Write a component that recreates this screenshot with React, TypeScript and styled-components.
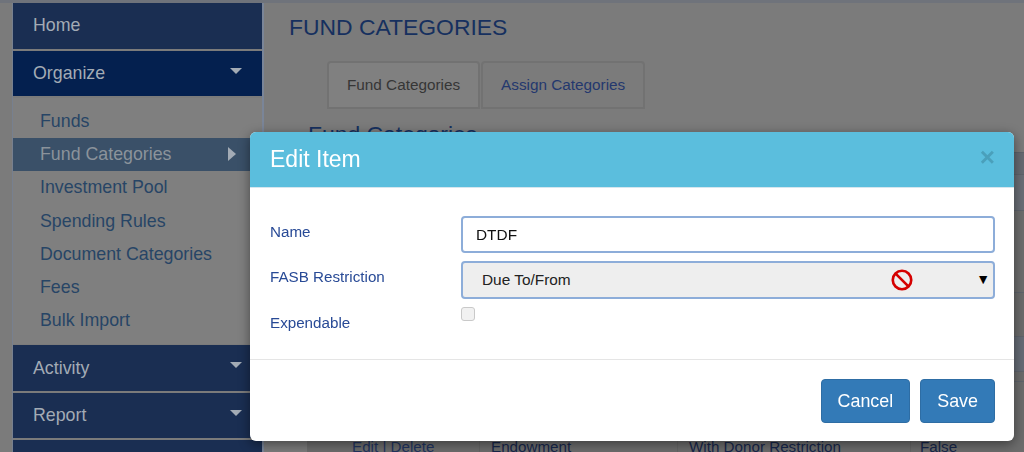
import styled, { createGlobalStyle } from "styled-components";

const GlobalStyle = createGlobalStyle`
  html, body {
    margin: 0;
    height: 100%;
    overflow: hidden;
    background: #7b7b7b;
    font-family: "Liberation Sans", Arial, sans-serif;
  }
`;

const subItems = [
  "Funds",
  "Fund Categories",
  "Investment Pool",
  "Spending Rules",
  "Document Categories",
  "Fees",
  "Bulk Import",
];

function App() {
  return (
    <>
      <GlobalStyle />
      <Page>
        <Sidebar>
          <NavHeader>Home</NavHeader>
          <NavHeader $open>
            Organize
            <CaretDown />
          </NavHeader>
          <SubMenu>
            {subItems.map((item) => (
              <SubItem key={item} $active={item === "Fund Categories"}>
                {item}
                {item === "Fund Categories" && <CaretRight />}
              </SubItem>
            ))}
          </SubMenu>
          <NavHeader>
            Activity
            <CaretDown />
          </NavHeader>
          <NavHeader>
            Report
            <CaretDown />
          </NavHeader>
          <NavHeader />
        </Sidebar>
        <Main>
          <PageTitle>FUND CATEGORIES</PageTitle>
          <Tabs>
            <Tab $active>Fund Categories</Tab>
            <Tab>Assign Categories</Tab>
          </Tabs>
          <SectionTitle>Fund Categories</SectionTitle>
          <Table>
            <TableRow $height={22} $tone="#666a72" />
            <TableRow $height={36} $tone="#6a6e76" />
            <TableRow $height={82} $tone="#6d6d6d" />
            <TableRow $height={44} $tone="#6b6b6b" />
            <TableRow $height={35} $tone="#656b75" />
            <TableRow $height={10} $tone="#6b6b6b" />
            <TableRow $height={74} $tone="#6c6c6c">
              <LinkCell>Edit | Delete</LinkCell>
              <TypeCell>Endowment</TypeCell>
              <RestrictionCell>With Donor Restriction</RestrictionCell>
              <FlagCell>False</FlagCell>
            </TableRow>
          </Table>
        </Main>
      </Page>
      <Modal>
        <ModalHeader>
          <ModalTitle>Edit Item</ModalTitle>
          <CloseButton>×</CloseButton>
        </ModalHeader>
        <ModalBody>
          <Label>Name</Label>
          <TextInput>DTDF</TextInput>
          <Label>FASB Restriction</Label>
          <SelectBox>
            Due To/From
            <NoEntry viewBox="0 0 20 20" aria-hidden="true">
              <circle cx="10" cy="10" r="8.4" fill="none" stroke="#d50000" strokeWidth="2.4" />
              <line x1="4.2" y1="4.2" x2="15.8" y2="15.8" stroke="#d50000" strokeWidth="2.4" />
            </NoEntry>
            <SelectArrow>▼</SelectArrow>
          </SelectBox>
          <Label>Expendable</Label>
          <CheckCell>
            <Checkbox />
          </CheckCell>
        </ModalBody>
        <ModalFooter>
          <FooterButton>Cancel</FooterButton>
          <FooterButton>Save</FooterButton>
        </ModalFooter>
      </Modal>
    </>
  );
}

export default App;

const Page = styled.div`
  display: flex;
  height: 452px;
  overflow: hidden;
  border-top: 3px solid #6f737b;
  box-sizing: border-box;
  padding-left: 13px;
`;

const Sidebar = styled.nav`
  width: 249px;
  flex-shrink: 0;
  display: flex;
  flex-direction: column;
  gap: 2px;
  border-left: 1px solid #77808f;
  margin-left: -1px;
  border-right: 2px solid #7a8598;
`;

const NavHeader = styled.div<{ $open?: boolean }>`
  flex-shrink: 0;
  height: 45.5px;
  box-sizing: border-box;
  padding: 0 0 0 20px;
  display: flex;
  align-items: center;
  position: relative;
  font-size: 17.8px;
  color: #a3abb5;
  background: ${(p) => (p.$open ? "#04204f" : "#1a2e52")};
`;

const CaretDown = styled.span`
  position: absolute;
  top: 17px;
  left: 217px;
  width: 0;
  height: 0;
  border-top: 6px solid #a3abb5;
  border-left: 6px solid transparent;
  border-right: 6px solid transparent;
`;

const CaretRight = styled.span`
  position: absolute;
  top: 9px;
  left: 215px;
  width: 0;
  height: 0;
  border-left: 8px solid #a3abb5;
  border-top: 7px solid transparent;
  border-bottom: 7px solid transparent;
`;

const SubMenu = styled.div`
  flex-shrink: 0;
  background: #7f7f7f;
  padding: 7px 0 7px;
  margin-bottom: -1px;
`;

const SubItem = styled.div<{ $active?: boolean }>`
  height: 33.2px;
  padding-left: 27px;
  box-sizing: border-box;
  display: flex;
  align-items: center;
  position: relative;
  font-size: 17.8px;
  color: ${(p) => (p.$active ? "#8b939b" : "#274566")};
  background: ${(p) => (p.$active ? "#3a5068" : "transparent")};
`;

const Main = styled.main`
  flex: 1;
  min-width: 0;
  padding-left: 25px;
`;

const PageTitle = styled.h1`
  margin: 0;
  padding-top: 11px;
  font-size: 22.9px;
  line-height: 27px;
  font-weight: 400;
  color: #16305f;
`;

const Tabs = styled.div`
  display: flex;
  gap: 1px;
  margin: 20px 0 0 38px;
`;

const Tab = styled.div<{ $active?: boolean }>`
  height: 48px;
  box-sizing: border-box;
  padding: 0 18px 1px 18px;
  display: flex;
  align-items: center;
  font-size: 15.3px;
  border: 2px solid #727272;
  border-radius: 4px 4px 0 0;
  color: ${(p) => (p.$active ? "#363636" : "#24386e")};
  background: ${(p) => (p.$active ? "#808080" : "transparent")};
`;

const SectionTitle = styled.h2`
  margin: 12px 0 0 19px;
  font-size: 22.9px;
  line-height: 27px;
  font-weight: 400;
  color: #16305f;
`;

const Table = styled.div`
  margin: 4px 0 0 18px;
`;

const TableRow = styled.div<{ $height: number; $tone: string }>`
  display: grid;
  grid-template-columns: 172px 198px 233px 1fr;
  height: ${(p) => p.$height}px;
  background: ${(p) => p.$tone};
  border-top: 1px solid #5f636b;
  box-sizing: border-box;
  font-size: 15.2px;
  color: #17264a;
  align-items: end;
  overflow: hidden;
`;

const LinkCell = styled.span`
  padding-left: 45px;
  color: #22345f;
`;

const TypeCell = styled.span`
  padding-left: 11px;
  border-left: 1px solid #646464;
`;

const RestrictionCell = styled.span`
  padding-left: 11px;
  border-left: 1px solid #646464;
`;

const FlagCell = styled.span`
  padding-left: 9px;
  border-left: 1px solid #646464;
`;

const Modal = styled.div`
  position: fixed;
  top: 132px;
  left: 250px;
  width: 764px;
  height: 309px;
  background: #fff;
  border-radius: 6px;
  overflow: hidden;
  box-shadow: 0 3px 12px rgba(0, 0, 0, 0.45);
  display: flex;
  flex-direction: column;
`;

const ModalHeader = styled.div`
  height: 56px;
  flex-shrink: 0;
  box-sizing: border-box;
  background: #5bbedd;
  border-bottom: 1px solid #d5e6ee;
  padding: 0 19px 0 20px;
  display: flex;
  align-items: center;
  justify-content: space-between;
`;

const ModalTitle = styled.div`
  font-size: 23px;
  color: #fff;
`;

const CloseButton = styled.span`
  font-size: 26px;
  line-height: 26px;
  font-weight: 700;
  color: #4aa0bb;
  margin-top: -6px;
`;

const ModalBody = styled.div`
  display: grid;
  grid-template-columns: 191px 534px;
  grid-template-rows: 37px 38px 38px;
  row-gap: 8px;
  padding: 28px 19px 0 20px;
  height: 172px;
  box-sizing: border-box;
  border-bottom: 1px solid #e5e5e5;
  flex-shrink: 0;
`;

const Label = styled.div`
  font-size: 15.2px;
  color: #284a96;
  display: flex;
  align-items: center;
  height: 31px;
`;

const TextInput = styled.div`
  box-sizing: border-box;
  height: 37px;
  border: 2px solid #8dadd9;
  border-radius: 4px;
  padding-left: 13px;
  display: flex;
  align-items: center;
  font-size: 15.4px;
  color: #111;
`;

const SelectBox = styled.div`
  box-sizing: border-box;
  height: 38px;
  border: 2px solid #8dadd9;
  border-radius: 4px;
  padding-left: 19px;
  background: #eeeeee;
  display: flex;
  align-items: center;
  position: relative;
  font-size: 15.4px;
  color: #222;
`;

const NoEntry = styled.svg`
  position: absolute;
  left: 428px;
  top: 6px;
  width: 22px;
  height: 22px;
`;

const SelectArrow = styled.span`
  position: absolute;
  right: 3px;
  top: 8px;
  font-size: 14px;
  color: #000;
`;

const CheckCell = styled.div`
  padding-top: 0;
`;

const Checkbox = styled.div`
  width: 14px;
  height: 14px;
  box-sizing: border-box;
  border: 1px solid #c9c9c9;
  border-radius: 3px;
  background: #f1f1f1;
`;

const ModalFooter = styled.div`
  flex: 1;
  display: flex;
  justify-content: flex-end;
  gap: 10px;
  padding: 19px 19px 0 0;
`;

const FooterButton = styled.div`
  height: 44px;
  box-sizing: border-box;
  padding: 0 16px;
  display: flex;
  align-items: center;
  font-size: 17.9px;
  color: #fff;
  background: #337ab7;
  border: 1px solid #2e6da4;
  border-radius: 4px;
`;
